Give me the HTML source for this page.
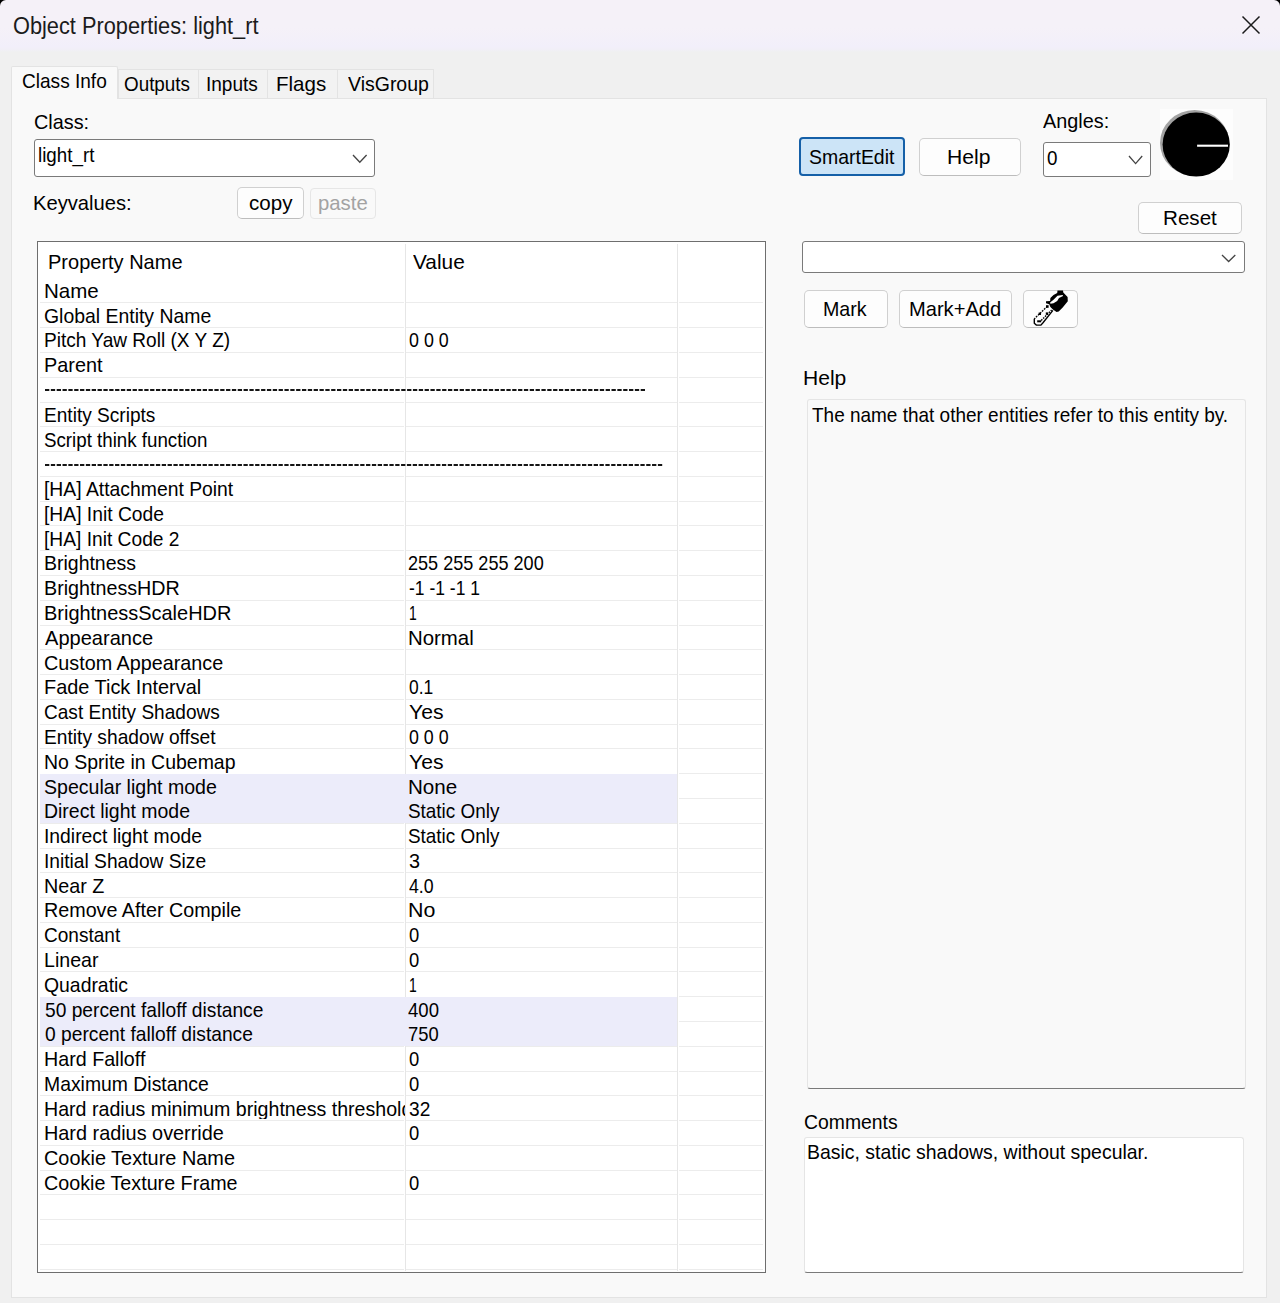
<!DOCTYPE html>
<html><head><meta charset="utf-8"><style>
html,body{margin:0;padding:0}
body{width:1280px;height:1303px;overflow:hidden;position:relative;background:#f0f0f0;font-family:"Liberation Sans",sans-serif}
body div,body svg{position:absolute}
.t{white-space:nowrap;line-height:24px;height:24px;transform-origin:0 0}
</style></head><body>
<div style="left:0.00px;top:0.00px;width:1280.00px;height:54.00px;background:linear-gradient(180deg,#f5f1f8 0,#f5f1f8 28px,#f2effa 47px,#f1eff6 50px,#f0f0f0 52px)"></div>
<svg style="left:0;top:0" width="10" height="10"><path d="M0 0 H6 A6 6 0 0 0 0 6 Z" fill="#000"/></svg>
<svg style="left:1270px;top:0" width="10" height="10"><path d="M10 0 H4 A6 6 0 0 1 10 6 Z" fill="#000"/></svg>
<div class="t" style="left:13.27px;top:13.90px;font-size:23px;transform:scaleX(0.9460);color:#1b1b1b;">Object Properties: light_rt</div>
<svg style="left:1240px;top:14px" width="22" height="22"><path d="M2.5 2.5 L19.5 19.5 M19.5 2.5 L2.5 19.5" stroke="#1a1a1a" stroke-width="1.5" fill="none"/></svg>
<div style="left:11px;top:98px;width:1256px;height:1200px;background:#f9f9f9;border:1px solid #e3e3e3;box-sizing:border-box"></div>
<div style="left:118px;top:69px;width:81px;height:29px;background:#f2f2f2;border:1px solid #e3e3e3;border-bottom:none;box-sizing:border-box"></div>
<div class="t" style="left:124.11px;top:71.60px;font-size:21px;transform:scaleX(0.8970);color:#000;">Outputs</div>
<div style="left:198px;top:69px;width:70px;height:29px;background:#f2f2f2;border:1px solid #e3e3e3;border-bottom:none;box-sizing:border-box"></div>
<div class="t" style="left:206.24px;top:71.60px;font-size:21px;transform:scaleX(0.9061);color:#000;">Inputs</div>
<div style="left:267px;top:69px;width:71px;height:29px;background:#f2f2f2;border:1px solid #e3e3e3;border-bottom:none;box-sizing:border-box"></div>
<div class="t" style="left:276.32px;top:71.60px;font-size:21px;transform:scaleX(0.9779);color:#000;">Flags</div>
<div style="left:337px;top:69px;width:97px;height:29px;background:#f2f2f2;border:1px solid #e3e3e3;border-bottom:none;box-sizing:border-box"></div>
<div class="t" style="left:347.91px;top:71.60px;font-size:21px;transform:scaleX(0.9281);color:#000;">VisGroup</div>
<div style="left:11px;top:66px;width:107px;height:33px;background:#f9f9f9;border:1px solid #e3e3e3;border-bottom:none;box-sizing:border-box;border-radius:2px 2px 0 0"></div>
<div class="t" style="left:22.03px;top:69.00px;font-size:21px;transform:scaleX(0.9078);color:#000;">Class Info</div>
<div class="t" style="left:33.59px;top:109.60px;font-size:21px;transform:scaleX(0.9445);color:#000;">Class:</div>
<div style="left:34px;top:139px;width:341px;height:38px;background:#fff;border:1px solid #7a7a7a;box-sizing:border-box;border-radius:3px"></div>
<div class="t" style="left:37.73px;top:143.00px;font-size:21px;transform:scaleX(0.8949);color:#000;">light_rt</div>
<svg style="left:351.00px;top:153.00px" width="17.60" height="11.30"><path d="M2 2 L8.80 9.30 L15.60 2" fill="none" stroke="#444" stroke-width="1.3"/></svg>
<div class="t" style="left:32.95px;top:190.80px;font-size:21px;transform:scaleX(0.9607);color:#000;">Keyvalues:</div>
<div style="left:237px;top:187px;width:67px;height:32px;background:#fdfdfd;border:1px solid #d0d0d0;border-bottom-color:#bdbdbd;box-sizing:border-box;border-radius:5px"></div>
<div class="t" style="left:248.53px;top:191.00px;font-size:21px;transform:scaleX(0.9787);color:#000;">copy</div>
<div style="left:310px;top:188px;width:66px;height:31px;background:#f9f9f9;border:1px solid #e6e6e6;box-sizing:border-box;border-radius:4px"></div>
<div class="t" style="left:318.09px;top:191.00px;font-size:21px;transform:scaleX(0.9676);color:#a3a3a3;">paste</div>
<div style="left:37px;top:241px;width:729px;height:1032px;background:#fff;border:1px solid #6e6e6e;box-sizing:border-box"></div>
<div style="left:40.00px;top:302.40px;width:364.00px;height:1.00px;background:#ececec"></div>
<div style="left:406.00px;top:302.40px;width:270.50px;height:1.00px;background:#ececec"></div>
<div style="left:678.50px;top:302.40px;width:84.50px;height:1.00px;background:#ececec"></div>
<div style="left:40.00px;top:327.18px;width:364.00px;height:1.00px;background:#ececec"></div>
<div style="left:406.00px;top:327.18px;width:270.50px;height:1.00px;background:#ececec"></div>
<div style="left:678.50px;top:327.18px;width:84.50px;height:1.00px;background:#ececec"></div>
<div style="left:40.00px;top:351.96px;width:364.00px;height:1.00px;background:#ececec"></div>
<div style="left:406.00px;top:351.96px;width:270.50px;height:1.00px;background:#ececec"></div>
<div style="left:678.50px;top:351.96px;width:84.50px;height:1.00px;background:#ececec"></div>
<div style="left:40.00px;top:376.74px;width:364.00px;height:1.00px;background:#ececec"></div>
<div style="left:406.00px;top:376.74px;width:270.50px;height:1.00px;background:#ececec"></div>
<div style="left:678.50px;top:376.74px;width:84.50px;height:1.00px;background:#ececec"></div>
<div style="left:40.00px;top:401.52px;width:364.00px;height:1.00px;background:#ececec"></div>
<div style="left:406.00px;top:401.52px;width:270.50px;height:1.00px;background:#ececec"></div>
<div style="left:678.50px;top:401.52px;width:84.50px;height:1.00px;background:#ececec"></div>
<div style="left:40.00px;top:426.30px;width:364.00px;height:1.00px;background:#ececec"></div>
<div style="left:406.00px;top:426.30px;width:270.50px;height:1.00px;background:#ececec"></div>
<div style="left:678.50px;top:426.30px;width:84.50px;height:1.00px;background:#ececec"></div>
<div style="left:40.00px;top:451.08px;width:364.00px;height:1.00px;background:#ececec"></div>
<div style="left:406.00px;top:451.08px;width:270.50px;height:1.00px;background:#ececec"></div>
<div style="left:678.50px;top:451.08px;width:84.50px;height:1.00px;background:#ececec"></div>
<div style="left:40.00px;top:475.86px;width:364.00px;height:1.00px;background:#ececec"></div>
<div style="left:406.00px;top:475.86px;width:270.50px;height:1.00px;background:#ececec"></div>
<div style="left:678.50px;top:475.86px;width:84.50px;height:1.00px;background:#ececec"></div>
<div style="left:40.00px;top:500.64px;width:364.00px;height:1.00px;background:#ececec"></div>
<div style="left:406.00px;top:500.64px;width:270.50px;height:1.00px;background:#ececec"></div>
<div style="left:678.50px;top:500.64px;width:84.50px;height:1.00px;background:#ececec"></div>
<div style="left:40.00px;top:525.42px;width:364.00px;height:1.00px;background:#ececec"></div>
<div style="left:406.00px;top:525.42px;width:270.50px;height:1.00px;background:#ececec"></div>
<div style="left:678.50px;top:525.42px;width:84.50px;height:1.00px;background:#ececec"></div>
<div style="left:40.00px;top:550.20px;width:364.00px;height:1.00px;background:#ececec"></div>
<div style="left:406.00px;top:550.20px;width:270.50px;height:1.00px;background:#ececec"></div>
<div style="left:678.50px;top:550.20px;width:84.50px;height:1.00px;background:#ececec"></div>
<div style="left:40.00px;top:574.98px;width:364.00px;height:1.00px;background:#ececec"></div>
<div style="left:406.00px;top:574.98px;width:270.50px;height:1.00px;background:#ececec"></div>
<div style="left:678.50px;top:574.98px;width:84.50px;height:1.00px;background:#ececec"></div>
<div style="left:40.00px;top:599.76px;width:364.00px;height:1.00px;background:#ececec"></div>
<div style="left:406.00px;top:599.76px;width:270.50px;height:1.00px;background:#ececec"></div>
<div style="left:678.50px;top:599.76px;width:84.50px;height:1.00px;background:#ececec"></div>
<div style="left:40.00px;top:624.54px;width:364.00px;height:1.00px;background:#ececec"></div>
<div style="left:406.00px;top:624.54px;width:270.50px;height:1.00px;background:#ececec"></div>
<div style="left:678.50px;top:624.54px;width:84.50px;height:1.00px;background:#ececec"></div>
<div style="left:40.00px;top:649.32px;width:364.00px;height:1.00px;background:#ececec"></div>
<div style="left:406.00px;top:649.32px;width:270.50px;height:1.00px;background:#ececec"></div>
<div style="left:678.50px;top:649.32px;width:84.50px;height:1.00px;background:#ececec"></div>
<div style="left:40.00px;top:674.10px;width:364.00px;height:1.00px;background:#ececec"></div>
<div style="left:406.00px;top:674.10px;width:270.50px;height:1.00px;background:#ececec"></div>
<div style="left:678.50px;top:674.10px;width:84.50px;height:1.00px;background:#ececec"></div>
<div style="left:40.00px;top:698.88px;width:364.00px;height:1.00px;background:#ececec"></div>
<div style="left:406.00px;top:698.88px;width:270.50px;height:1.00px;background:#ececec"></div>
<div style="left:678.50px;top:698.88px;width:84.50px;height:1.00px;background:#ececec"></div>
<div style="left:40.00px;top:723.66px;width:364.00px;height:1.00px;background:#ececec"></div>
<div style="left:406.00px;top:723.66px;width:270.50px;height:1.00px;background:#ececec"></div>
<div style="left:678.50px;top:723.66px;width:84.50px;height:1.00px;background:#ececec"></div>
<div style="left:40.00px;top:748.44px;width:364.00px;height:1.00px;background:#ececec"></div>
<div style="left:406.00px;top:748.44px;width:270.50px;height:1.00px;background:#ececec"></div>
<div style="left:678.50px;top:748.44px;width:84.50px;height:1.00px;background:#ececec"></div>
<div style="left:678.50px;top:773.22px;width:84.50px;height:1.00px;background:#ececec"></div>
<div style="left:678.50px;top:798.00px;width:84.50px;height:1.00px;background:#ececec"></div>
<div style="left:40.00px;top:822.78px;width:364.00px;height:1.00px;background:#ececec"></div>
<div style="left:406.00px;top:822.78px;width:270.50px;height:1.00px;background:#ececec"></div>
<div style="left:678.50px;top:822.78px;width:84.50px;height:1.00px;background:#ececec"></div>
<div style="left:40.00px;top:847.56px;width:364.00px;height:1.00px;background:#ececec"></div>
<div style="left:406.00px;top:847.56px;width:270.50px;height:1.00px;background:#ececec"></div>
<div style="left:678.50px;top:847.56px;width:84.50px;height:1.00px;background:#ececec"></div>
<div style="left:40.00px;top:872.34px;width:364.00px;height:1.00px;background:#ececec"></div>
<div style="left:406.00px;top:872.34px;width:270.50px;height:1.00px;background:#ececec"></div>
<div style="left:678.50px;top:872.34px;width:84.50px;height:1.00px;background:#ececec"></div>
<div style="left:40.00px;top:897.12px;width:364.00px;height:1.00px;background:#ececec"></div>
<div style="left:406.00px;top:897.12px;width:270.50px;height:1.00px;background:#ececec"></div>
<div style="left:678.50px;top:897.12px;width:84.50px;height:1.00px;background:#ececec"></div>
<div style="left:40.00px;top:921.90px;width:364.00px;height:1.00px;background:#ececec"></div>
<div style="left:406.00px;top:921.90px;width:270.50px;height:1.00px;background:#ececec"></div>
<div style="left:678.50px;top:921.90px;width:84.50px;height:1.00px;background:#ececec"></div>
<div style="left:40.00px;top:946.68px;width:364.00px;height:1.00px;background:#ececec"></div>
<div style="left:406.00px;top:946.68px;width:270.50px;height:1.00px;background:#ececec"></div>
<div style="left:678.50px;top:946.68px;width:84.50px;height:1.00px;background:#ececec"></div>
<div style="left:40.00px;top:971.46px;width:364.00px;height:1.00px;background:#ececec"></div>
<div style="left:406.00px;top:971.46px;width:270.50px;height:1.00px;background:#ececec"></div>
<div style="left:678.50px;top:971.46px;width:84.50px;height:1.00px;background:#ececec"></div>
<div style="left:678.50px;top:996.24px;width:84.50px;height:1.00px;background:#ececec"></div>
<div style="left:678.50px;top:1021.02px;width:84.50px;height:1.00px;background:#ececec"></div>
<div style="left:40.00px;top:1045.80px;width:364.00px;height:1.00px;background:#ececec"></div>
<div style="left:406.00px;top:1045.80px;width:270.50px;height:1.00px;background:#ececec"></div>
<div style="left:678.50px;top:1045.80px;width:84.50px;height:1.00px;background:#ececec"></div>
<div style="left:40.00px;top:1070.58px;width:364.00px;height:1.00px;background:#ececec"></div>
<div style="left:406.00px;top:1070.58px;width:270.50px;height:1.00px;background:#ececec"></div>
<div style="left:678.50px;top:1070.58px;width:84.50px;height:1.00px;background:#ececec"></div>
<div style="left:40.00px;top:1095.36px;width:364.00px;height:1.00px;background:#ececec"></div>
<div style="left:406.00px;top:1095.36px;width:270.50px;height:1.00px;background:#ececec"></div>
<div style="left:678.50px;top:1095.36px;width:84.50px;height:1.00px;background:#ececec"></div>
<div style="left:40.00px;top:1120.14px;width:364.00px;height:1.00px;background:#ececec"></div>
<div style="left:406.00px;top:1120.14px;width:270.50px;height:1.00px;background:#ececec"></div>
<div style="left:678.50px;top:1120.14px;width:84.50px;height:1.00px;background:#ececec"></div>
<div style="left:40.00px;top:1144.92px;width:364.00px;height:1.00px;background:#ececec"></div>
<div style="left:406.00px;top:1144.92px;width:270.50px;height:1.00px;background:#ececec"></div>
<div style="left:678.50px;top:1144.92px;width:84.50px;height:1.00px;background:#ececec"></div>
<div style="left:40.00px;top:1169.70px;width:364.00px;height:1.00px;background:#ececec"></div>
<div style="left:406.00px;top:1169.70px;width:270.50px;height:1.00px;background:#ececec"></div>
<div style="left:678.50px;top:1169.70px;width:84.50px;height:1.00px;background:#ececec"></div>
<div style="left:40.00px;top:1194.48px;width:364.00px;height:1.00px;background:#ececec"></div>
<div style="left:406.00px;top:1194.48px;width:270.50px;height:1.00px;background:#ececec"></div>
<div style="left:678.50px;top:1194.48px;width:84.50px;height:1.00px;background:#ececec"></div>
<div style="left:40.00px;top:1219.26px;width:364.00px;height:1.00px;background:#ececec"></div>
<div style="left:406.00px;top:1219.26px;width:270.50px;height:1.00px;background:#ececec"></div>
<div style="left:678.50px;top:1219.26px;width:84.50px;height:1.00px;background:#ececec"></div>
<div style="left:40.00px;top:1244.04px;width:364.00px;height:1.00px;background:#ececec"></div>
<div style="left:406.00px;top:1244.04px;width:270.50px;height:1.00px;background:#ececec"></div>
<div style="left:678.50px;top:1244.04px;width:84.50px;height:1.00px;background:#ececec"></div>
<div style="left:40.00px;top:1268.82px;width:364.00px;height:1.00px;background:#ececec"></div>
<div style="left:406.00px;top:1268.82px;width:270.50px;height:1.00px;background:#ececec"></div>
<div style="left:678.50px;top:1268.82px;width:84.50px;height:1.00px;background:#ececec"></div>
<div style="left:404.50px;top:244.00px;width:1.00px;height:1027.00px;background:#e6e6e6"></div>
<div style="left:677.00px;top:244.00px;width:1.00px;height:1027.00px;background:#e6e6e6"></div>
<div style="left:40.00px;top:773.72px;width:637.00px;height:49.56px;background:#ececfa"></div>
<div style="left:40.00px;top:996.74px;width:637.00px;height:49.56px;background:#ececfa"></div>
<div class="t" style="left:48.06px;top:249.70px;font-size:21px;transform:scaleX(0.9526);color:#000;">Property Name</div>
<div class="t" style="left:412.61px;top:249.60px;font-size:21px;transform:scaleX(0.9916);color:#000;">Value</div>
<div class="t" style="left:43.62px;top:278.90px;font-size:21px;transform:scaleX(0.9780);color:#000;">Name</div>
<div class="t" style="left:44.32px;top:303.68px;font-size:21px;transform:scaleX(0.9246);color:#000;">Global Entity Name</div>
<div class="t" style="left:43.74px;top:328.46px;font-size:21px;transform:scaleX(0.9081);color:#000;">Pitch Yaw Roll (X Y Z)</div>
<div class="t" style="left:408.60px;top:328.46px;font-size:21px;transform:scaleX(0.8496);color:#000;">0 0 0</div>
<div class="t" style="left:43.67px;top:353.24px;font-size:21px;transform:scaleX(0.9450);color:#000;">Parent</div>
<svg style="left:44.5px;top:389.32px" width="604.5" height="2" fill="#151515"><rect x="0.00" y="0" width="4.3" height="2" /><rect x="5.84" y="0" width="4.3" height="2" /><rect x="11.68" y="0" width="4.3" height="2" /><rect x="17.52" y="0" width="4.3" height="2" /><rect x="23.36" y="0" width="4.3" height="2" /><rect x="29.20" y="0" width="4.3" height="2" /><rect x="35.04" y="0" width="4.3" height="2" /><rect x="40.88" y="0" width="4.3" height="2" /><rect x="46.72" y="0" width="4.3" height="2" /><rect x="52.56" y="0" width="4.3" height="2" /><rect x="58.40" y="0" width="4.3" height="2" /><rect x="64.24" y="0" width="4.3" height="2" /><rect x="70.08" y="0" width="4.3" height="2" /><rect x="75.92" y="0" width="4.3" height="2" /><rect x="81.76" y="0" width="4.3" height="2" /><rect x="87.60" y="0" width="4.3" height="2" /><rect x="93.44" y="0" width="4.3" height="2" /><rect x="99.28" y="0" width="4.3" height="2" /><rect x="105.12" y="0" width="4.3" height="2" /><rect x="110.96" y="0" width="4.3" height="2" /><rect x="116.80" y="0" width="4.3" height="2" /><rect x="122.64" y="0" width="4.3" height="2" /><rect x="128.48" y="0" width="4.3" height="2" /><rect x="134.32" y="0" width="4.3" height="2" /><rect x="140.16" y="0" width="4.3" height="2" /><rect x="146.00" y="0" width="4.3" height="2" /><rect x="151.85" y="0" width="4.3" height="2" /><rect x="157.69" y="0" width="4.3" height="2" /><rect x="163.53" y="0" width="4.3" height="2" /><rect x="169.37" y="0" width="4.3" height="2" /><rect x="175.21" y="0" width="4.3" height="2" /><rect x="181.05" y="0" width="4.3" height="2" /><rect x="186.89" y="0" width="4.3" height="2" /><rect x="192.73" y="0" width="4.3" height="2" /><rect x="198.57" y="0" width="4.3" height="2" /><rect x="204.41" y="0" width="4.3" height="2" /><rect x="210.25" y="0" width="4.3" height="2" /><rect x="216.09" y="0" width="4.3" height="2" /><rect x="221.93" y="0" width="4.3" height="2" /><rect x="227.77" y="0" width="4.3" height="2" /><rect x="233.61" y="0" width="4.3" height="2" /><rect x="239.45" y="0" width="4.3" height="2" /><rect x="245.29" y="0" width="4.3" height="2" /><rect x="251.13" y="0" width="4.3" height="2" /><rect x="256.97" y="0" width="4.3" height="2" /><rect x="262.81" y="0" width="4.3" height="2" /><rect x="268.65" y="0" width="4.3" height="2" /><rect x="274.49" y="0" width="4.3" height="2" /><rect x="280.33" y="0" width="4.3" height="2" /><rect x="286.17" y="0" width="4.3" height="2" /><rect x="292.01" y="0" width="4.3" height="2" /><rect x="297.85" y="0" width="4.3" height="2" /><rect x="303.69" y="0" width="4.3" height="2" /><rect x="309.53" y="0" width="4.3" height="2" /><rect x="315.37" y="0" width="4.3" height="2" /><rect x="321.21" y="0" width="4.3" height="2" /><rect x="327.05" y="0" width="4.3" height="2" /><rect x="332.89" y="0" width="4.3" height="2" /><rect x="338.73" y="0" width="4.3" height="2" /><rect x="344.57" y="0" width="4.3" height="2" /><rect x="350.41" y="0" width="4.3" height="2" /><rect x="356.25" y="0" width="4.3" height="2" /><rect x="362.09" y="0" width="4.3" height="2" /><rect x="367.93" y="0" width="4.3" height="2" /><rect x="373.77" y="0" width="4.3" height="2" /><rect x="379.61" y="0" width="4.3" height="2" /><rect x="385.45" y="0" width="4.3" height="2" /><rect x="391.29" y="0" width="4.3" height="2" /><rect x="397.13" y="0" width="4.3" height="2" /><rect x="402.97" y="0" width="4.3" height="2" /><rect x="408.81" y="0" width="4.3" height="2" /><rect x="414.65" y="0" width="4.3" height="2" /><rect x="420.49" y="0" width="4.3" height="2" /><rect x="426.33" y="0" width="4.3" height="2" /><rect x="432.17" y="0" width="4.3" height="2" /><rect x="438.01" y="0" width="4.3" height="2" /><rect x="443.85" y="0" width="4.3" height="2" /><rect x="449.70" y="0" width="4.3" height="2" /><rect x="455.54" y="0" width="4.3" height="2" /><rect x="461.38" y="0" width="4.3" height="2" /><rect x="467.22" y="0" width="4.3" height="2" /><rect x="473.06" y="0" width="4.3" height="2" /><rect x="478.90" y="0" width="4.3" height="2" /><rect x="484.74" y="0" width="4.3" height="2" /><rect x="490.58" y="0" width="4.3" height="2" /><rect x="496.42" y="0" width="4.3" height="2" /><rect x="502.26" y="0" width="4.3" height="2" /><rect x="508.10" y="0" width="4.3" height="2" /><rect x="513.94" y="0" width="4.3" height="2" /><rect x="519.78" y="0" width="4.3" height="2" /><rect x="525.62" y="0" width="4.3" height="2" /><rect x="531.46" y="0" width="4.3" height="2" /><rect x="537.30" y="0" width="4.3" height="2" /><rect x="543.14" y="0" width="4.3" height="2" /><rect x="548.98" y="0" width="4.3" height="2" /><rect x="554.82" y="0" width="4.3" height="2" /><rect x="560.66" y="0" width="4.3" height="2" /><rect x="566.50" y="0" width="4.3" height="2" /><rect x="572.34" y="0" width="4.3" height="2" /><rect x="578.18" y="0" width="4.3" height="2" /><rect x="584.02" y="0" width="4.3" height="2" /><rect x="589.86" y="0" width="4.3" height="2" /><rect x="595.70" y="0" width="4.3" height="2" /></svg>
<div class="t" style="left:43.73px;top:402.80px;font-size:21px;transform:scaleX(0.9087);color:#000;">Entity Scripts</div>
<div class="t" style="left:44.45px;top:427.58px;font-size:21px;transform:scaleX(0.8914);color:#000;">Script think function</div>
<svg style="left:44.5px;top:463.66px" width="621.7" height="2" fill="#151515"><rect x="0.00" y="0" width="4.3" height="2" /><rect x="5.84" y="0" width="4.3" height="2" /><rect x="11.67" y="0" width="4.3" height="2" /><rect x="17.51" y="0" width="4.3" height="2" /><rect x="23.35" y="0" width="4.3" height="2" /><rect x="29.19" y="0" width="4.3" height="2" /><rect x="35.02" y="0" width="4.3" height="2" /><rect x="40.86" y="0" width="4.3" height="2" /><rect x="46.70" y="0" width="4.3" height="2" /><rect x="52.53" y="0" width="4.3" height="2" /><rect x="58.37" y="0" width="4.3" height="2" /><rect x="64.21" y="0" width="4.3" height="2" /><rect x="70.05" y="0" width="4.3" height="2" /><rect x="75.88" y="0" width="4.3" height="2" /><rect x="81.72" y="0" width="4.3" height="2" /><rect x="87.56" y="0" width="4.3" height="2" /><rect x="93.39" y="0" width="4.3" height="2" /><rect x="99.23" y="0" width="4.3" height="2" /><rect x="105.07" y="0" width="4.3" height="2" /><rect x="110.91" y="0" width="4.3" height="2" /><rect x="116.74" y="0" width="4.3" height="2" /><rect x="122.58" y="0" width="4.3" height="2" /><rect x="128.42" y="0" width="4.3" height="2" /><rect x="134.25" y="0" width="4.3" height="2" /><rect x="140.09" y="0" width="4.3" height="2" /><rect x="145.93" y="0" width="4.3" height="2" /><rect x="151.77" y="0" width="4.3" height="2" /><rect x="157.60" y="0" width="4.3" height="2" /><rect x="163.44" y="0" width="4.3" height="2" /><rect x="169.28" y="0" width="4.3" height="2" /><rect x="175.11" y="0" width="4.3" height="2" /><rect x="180.95" y="0" width="4.3" height="2" /><rect x="186.79" y="0" width="4.3" height="2" /><rect x="192.63" y="0" width="4.3" height="2" /><rect x="198.46" y="0" width="4.3" height="2" /><rect x="204.30" y="0" width="4.3" height="2" /><rect x="210.14" y="0" width="4.3" height="2" /><rect x="215.97" y="0" width="4.3" height="2" /><rect x="221.81" y="0" width="4.3" height="2" /><rect x="227.65" y="0" width="4.3" height="2" /><rect x="233.49" y="0" width="4.3" height="2" /><rect x="239.32" y="0" width="4.3" height="2" /><rect x="245.16" y="0" width="4.3" height="2" /><rect x="251.00" y="0" width="4.3" height="2" /><rect x="256.83" y="0" width="4.3" height="2" /><rect x="262.67" y="0" width="4.3" height="2" /><rect x="268.51" y="0" width="4.3" height="2" /><rect x="274.35" y="0" width="4.3" height="2" /><rect x="280.18" y="0" width="4.3" height="2" /><rect x="286.02" y="0" width="4.3" height="2" /><rect x="291.86" y="0" width="4.3" height="2" /><rect x="297.69" y="0" width="4.3" height="2" /><rect x="303.53" y="0" width="4.3" height="2" /><rect x="309.37" y="0" width="4.3" height="2" /><rect x="315.21" y="0" width="4.3" height="2" /><rect x="321.04" y="0" width="4.3" height="2" /><rect x="326.88" y="0" width="4.3" height="2" /><rect x="332.72" y="0" width="4.3" height="2" /><rect x="338.55" y="0" width="4.3" height="2" /><rect x="344.39" y="0" width="4.3" height="2" /><rect x="350.23" y="0" width="4.3" height="2" /><rect x="356.07" y="0" width="4.3" height="2" /><rect x="361.90" y="0" width="4.3" height="2" /><rect x="367.74" y="0" width="4.3" height="2" /><rect x="373.58" y="0" width="4.3" height="2" /><rect x="379.41" y="0" width="4.3" height="2" /><rect x="385.25" y="0" width="4.3" height="2" /><rect x="391.09" y="0" width="4.3" height="2" /><rect x="396.93" y="0" width="4.3" height="2" /><rect x="402.76" y="0" width="4.3" height="2" /><rect x="408.60" y="0" width="4.3" height="2" /><rect x="414.44" y="0" width="4.3" height="2" /><rect x="420.27" y="0" width="4.3" height="2" /><rect x="426.11" y="0" width="4.3" height="2" /><rect x="431.95" y="0" width="4.3" height="2" /><rect x="437.79" y="0" width="4.3" height="2" /><rect x="443.62" y="0" width="4.3" height="2" /><rect x="449.46" y="0" width="4.3" height="2" /><rect x="455.30" y="0" width="4.3" height="2" /><rect x="461.13" y="0" width="4.3" height="2" /><rect x="466.97" y="0" width="4.3" height="2" /><rect x="472.81" y="0" width="4.3" height="2" /><rect x="478.65" y="0" width="4.3" height="2" /><rect x="484.48" y="0" width="4.3" height="2" /><rect x="490.32" y="0" width="4.3" height="2" /><rect x="496.16" y="0" width="4.3" height="2" /><rect x="501.99" y="0" width="4.3" height="2" /><rect x="507.83" y="0" width="4.3" height="2" /><rect x="513.67" y="0" width="4.3" height="2" /><rect x="519.51" y="0" width="4.3" height="2" /><rect x="525.34" y="0" width="4.3" height="2" /><rect x="531.18" y="0" width="4.3" height="2" /><rect x="537.02" y="0" width="4.3" height="2" /><rect x="542.85" y="0" width="4.3" height="2" /><rect x="548.69" y="0" width="4.3" height="2" /><rect x="554.53" y="0" width="4.3" height="2" /><rect x="560.37" y="0" width="4.3" height="2" /><rect x="566.20" y="0" width="4.3" height="2" /><rect x="572.04" y="0" width="4.3" height="2" /><rect x="577.88" y="0" width="4.3" height="2" /><rect x="583.71" y="0" width="4.3" height="2" /><rect x="589.55" y="0" width="4.3" height="2" /><rect x="595.39" y="0" width="4.3" height="2" /><rect x="601.23" y="0" width="4.3" height="2" /><rect x="607.06" y="0" width="4.3" height="2" /><rect x="612.90" y="0" width="4.3" height="2" /></svg>
<div class="t" style="left:43.92px;top:477.14px;font-size:21px;transform:scaleX(0.9211);color:#000;">[HA] Attachment Point</div>
<div class="t" style="left:43.93px;top:501.92px;font-size:21px;transform:scaleX(0.9181);color:#000;">[HA] Init Code</div>
<div class="t" style="left:43.93px;top:526.70px;font-size:21px;transform:scaleX(0.9142);color:#000;">[HA] Init Code 2</div>
<div class="t" style="left:43.70px;top:551.48px;font-size:21px;transform:scaleX(0.9273);color:#000;">Brightness</div>
<div class="t" style="left:408.39px;top:551.48px;font-size:21px;transform:scaleX(0.8608);color:#000;">255 255 255 200</div>
<div class="t" style="left:43.68px;top:576.26px;font-size:21px;transform:scaleX(0.9386);color:#000;">BrightnessHDR</div>
<div class="t" style="left:408.52px;top:576.26px;font-size:21px;transform:scaleX(0.8325);color:#000;">-1 -1 -1 1</div>
<div class="t" style="left:43.66px;top:601.04px;font-size:21px;transform:scaleX(0.9499);color:#000;">BrightnessScaleHDR</div>
<div class="t" style="left:409.34px;top:601.04px;font-size:21px;transform:scaleX(0.6621);color:#000;">1</div>
<div class="t" style="left:45.26px;top:625.82px;font-size:21px;transform:scaleX(0.9555);color:#000;">Appearance</div>
<div class="t" style="left:407.83px;top:625.82px;font-size:21px;transform:scaleX(0.9712);color:#000;">Normal</div>
<div class="t" style="left:44.30px;top:650.60px;font-size:21px;transform:scaleX(0.9416);color:#000;">Custom Appearance</div>
<div class="t" style="left:43.67px;top:675.38px;font-size:21px;transform:scaleX(0.9483);color:#000;">Fade Tick Interval</div>
<div class="t" style="left:408.62px;top:675.38px;font-size:21px;transform:scaleX(0.8298);color:#000;">0.1</div>
<div class="t" style="left:44.33px;top:700.16px;font-size:21px;transform:scaleX(0.9071);color:#000;">Cast Entity Shadows</div>
<div class="t" style="left:409.04px;top:700.16px;font-size:21px;transform:scaleX(1.0077);color:#000;">Yes</div>
<div class="t" style="left:43.72px;top:724.94px;font-size:21px;transform:scaleX(0.9144);color:#000;">Entity shadow offset</div>
<div class="t" style="left:408.60px;top:724.94px;font-size:21px;transform:scaleX(0.8474);color:#000;">0 0 0</div>
<div class="t" style="left:43.70px;top:749.72px;font-size:21px;transform:scaleX(0.9269);color:#000;">No Sprite in Cubemap</div>
<div class="t" style="left:409.04px;top:749.72px;font-size:21px;transform:scaleX(1.0077);color:#000;">Yes</div>
<div class="t" style="left:44.41px;top:774.50px;font-size:21px;transform:scaleX(0.9313);color:#000;">Specular light mode</div>
<div class="t" style="left:407.81px;top:774.50px;font-size:21px;transform:scaleX(0.9801);color:#000;">None</div>
<div class="t" style="left:43.70px;top:799.28px;font-size:21px;transform:scaleX(0.9264);color:#000;">Direct light mode</div>
<div class="t" style="left:408.44px;top:799.28px;font-size:21px;transform:scaleX(0.9000);color:#000;">Static Only</div>
<div class="t" style="left:43.52px;top:824.06px;font-size:21px;transform:scaleX(0.9204);color:#000;">Indirect light mode</div>
<div class="t" style="left:408.44px;top:824.06px;font-size:21px;transform:scaleX(0.9000);color:#000;">Static Only</div>
<div class="t" style="left:43.53px;top:848.84px;font-size:21px;transform:scaleX(0.9137);color:#000;">Initial Shadow Size</div>
<div class="t" style="left:408.55px;top:848.84px;font-size:21px;transform:scaleX(0.9433);color:#000;">3</div>
<div class="t" style="left:43.68px;top:873.62px;font-size:21px;transform:scaleX(0.9416);color:#000;">Near Z</div>
<div class="t" style="left:408.89px;top:873.62px;font-size:21px;transform:scaleX(0.8423);color:#000;">4.0</div>
<div class="t" style="left:43.68px;top:898.40px;font-size:21px;transform:scaleX(0.9391);color:#000;">Remove After Compile</div>
<div class="t" style="left:407.75px;top:898.40px;font-size:21px;transform:scaleX(1.0184);color:#000;">No</div>
<div class="t" style="left:44.33px;top:923.18px;font-size:21px;transform:scaleX(0.9065);color:#000;">Constant</div>
<div class="t" style="left:408.58px;top:923.18px;font-size:21px;transform:scaleX(0.8759);color:#000;">0</div>
<div class="t" style="left:43.69px;top:947.96px;font-size:21px;transform:scaleX(0.9340);color:#000;">Linear</div>
<div class="t" style="left:408.58px;top:947.96px;font-size:21px;transform:scaleX(0.8759);color:#000;">0</div>
<div class="t" style="left:44.38px;top:972.74px;font-size:21px;transform:scaleX(0.9229);color:#000;">Quadratic</div>
<div class="t" style="left:409.34px;top:972.74px;font-size:21px;transform:scaleX(0.6621);color:#000;">1</div>
<div class="t" style="left:44.53px;top:997.52px;font-size:21px;transform:scaleX(0.9137);color:#000;">50 percent falloff distance</div>
<div class="t" style="left:408.17px;top:997.52px;font-size:21px;transform:scaleX(0.8831);color:#000;">400</div>
<div class="t" style="left:44.55px;top:1022.30px;font-size:21px;transform:scaleX(0.9148);color:#000;">0 percent falloff distance</div>
<div class="t" style="left:408.46px;top:1022.30px;font-size:21px;transform:scaleX(0.8748);color:#000;">750</div>
<div class="t" style="left:43.69px;top:1047.08px;font-size:21px;transform:scaleX(0.9373);color:#000;">Hard Falloff</div>
<div class="t" style="left:408.58px;top:1047.08px;font-size:21px;transform:scaleX(0.8759);color:#000;">0</div>
<div class="t" style="left:43.71px;top:1071.86px;font-size:21px;transform:scaleX(0.9227);color:#000;">Maximum Distance</div>
<div class="t" style="left:408.58px;top:1071.86px;font-size:21px;transform:scaleX(0.8759);color:#000;">0</div>
<div style="left:45.3px;top:1090.64px;width:359.7px;height:28px;overflow:hidden">
<div class="t" style="left:-1.61px;top:6.00px;font-size:21px;transform:scaleX(0.9338);color:#000;">Hard radius minimum brightness threshold</div>
</div>
<div class="t" style="left:408.67px;top:1096.64px;font-size:21px;transform:scaleX(0.9115);color:#000;">32</div>
<div class="t" style="left:43.67px;top:1121.42px;font-size:21px;transform:scaleX(0.9450);color:#000;">Hard radius override</div>
<div class="t" style="left:408.58px;top:1121.42px;font-size:21px;transform:scaleX(0.8759);color:#000;">0</div>
<div class="t" style="left:44.29px;top:1146.20px;font-size:21px;transform:scaleX(0.9476);color:#000;">Cookie Texture Name</div>
<div class="t" style="left:44.30px;top:1170.98px;font-size:21px;transform:scaleX(0.9388);color:#000;">Cookie Texture Frame</div>
<div class="t" style="left:408.58px;top:1170.98px;font-size:21px;transform:scaleX(0.8759);color:#000;">0</div>
<div style="left:799px;top:137px;width:106px;height:39px;background:#cce4f7;border:2px solid #1560a8;box-sizing:border-box;border-radius:4px"></div>
<div class="t" style="left:808.82px;top:144.80px;font-size:21px;transform:scaleX(0.9265);color:#000;">SmartEdit</div>
<div style="left:919px;top:138px;width:102px;height:38px;background:#fdfdfd;border:1px solid #d0d0d0;border-bottom-color:#bdbdbd;box-sizing:border-box;border-radius:5px"></div>
<div class="t" style="left:947.27px;top:144.80px;font-size:21px;transform:scaleX(1.0050);color:#000;">Help</div>
<div class="t" style="left:1043.36px;top:109.40px;font-size:21px;transform:scaleX(0.9444);color:#000;">Angles:</div>
<div style="left:1043px;top:142px;width:108px;height:35px;background:#fff;border:1px solid #7a7a7a;box-sizing:border-box;border-radius:3px"></div>
<div class="t" style="left:1047.27px;top:146.30px;font-size:21px;transform:scaleX(0.8958);color:#000;">0</div>
<svg style="left:1126.80px;top:154.40px" width="17.20" height="11.60"><path d="M2 2 L8.60 9.60 L15.20 2" fill="none" stroke="#444" stroke-width="1.3"/></svg>
<div style="left:1159.80px;top:108.60px;width:73.70px;height:71.40px;background:#fdfdfd"></div>
<svg style="left:1158px;top:107px" width="76" height="74"><ellipse cx="36.6" cy="36" rx="34.6" ry="33" fill="#a3a3a3"/><ellipse cx="38.2" cy="37.6" rx="33.6" ry="32" fill="#000"/><path d="M39.1 38.7 H70" stroke="#fff" stroke-width="2.1"/></svg>
<div style="left:1138px;top:202px;width:104px;height:32px;background:#fdfdfd;border:1px solid #d0d0d0;border-bottom-color:#bdbdbd;box-sizing:border-box;border-radius:5px"></div>
<div class="t" style="left:1163.21px;top:205.90px;font-size:21px;transform:scaleX(0.9814);color:#000;">Reset</div>
<div style="left:802px;top:241px;width:443px;height:32px;background:#fff;border:1px solid #7a7a7a;box-sizing:border-box;border-radius:3px"></div>
<svg style="left:1220.30px;top:252.80px" width="17.30" height="10.50"><path d="M2 2 L8.65 8.50 L15.30 2" fill="none" stroke="#444" stroke-width="1.3"/></svg>
<div style="left:804px;top:290px;width:84px;height:38px;background:#fdfdfd;border:1px solid #d0d0d0;border-bottom-color:#bdbdbd;box-sizing:border-box;border-radius:5px"></div>
<div class="t" style="left:823.29px;top:297.20px;font-size:21px;transform:scaleX(0.9360);color:#000;">Mark</div>
<div style="left:899px;top:290px;width:113px;height:38px;background:#fdfdfd;border:1px solid #d0d0d0;border-bottom-color:#bdbdbd;box-sizing:border-box;border-radius:5px"></div>
<div class="t" style="left:909.15px;top:297.20px;font-size:21px;transform:scaleX(0.9569);color:#000;">Mark+Add</div>
<div style="left:1023px;top:290px;width:55px;height:38px;background:#fdfdfd;border:1px solid #d0d0d0;border-bottom-color:#bdbdbd;box-sizing:border-box;border-radius:5px"></div>
<svg style="left:1032px;top:289px" width="40" height="40" viewBox="0 0 40 40"><g transform="translate(-1032,-289)">
<path d="M1057.5 290.6 H1063 L1063.3 292.6 L1067.6 296.9 L1067.8 301.2 L1062.7 307.6 L1058.7 311.6 L1056.6 311.9 L1052.9 309.5 L1050.4 307 L1049.2 304.3 L1046 303.3 V301.2 L1050.1 300.9 L1050.4 298.1 L1053.5 295.1 L1057.2 292.9 Z" fill="#000"/>
<path d="M1062.7 294.9 L1063 296 L1059 298.1 L1057.2 300.9 L1053.5 303.3 L1050.4 303.7 L1050.1 302.4 L1053.5 299.7 L1057.5 295.7 Z" fill="#fff"/>
<path d="M1047.3 306.4 L1035.1 318.1" fill="none" stroke="#000" stroke-width="1.3" stroke-dasharray="1.8 1"/><path d="M1035.1 318.1 L1034.3 319.2 V323.3 L1036.3 325.1 H1040.9 L1043 322.7 L1052.9 310.4" fill="none" stroke="#000" stroke-width="1.4" stroke-linejoin="miter"/>
<path d="M1041.2 320.5 L1051.6 310.1" fill="none" stroke="#000" stroke-width="1.4" stroke-dasharray="1.6 1.1"/>
<rect x="1037.2" y="320.3" width="4" height="2" fill="#000"/>
<rect x="1046" y="305.2" width="2.6" height="2.6" fill="#000"/>
<rect x="1038.6" y="312.6" width="2.4" height="2.4" fill="#000"/>
<rect x="1045.8" y="312.4" width="2.4" height="2.4" fill="#000"/>
</g>
</svg>
<div class="t" style="left:802.87px;top:366.40px;font-size:21px;transform:scaleX(1.0025);color:#000;">Help</div>
<div style="left:807px;top:399px;width:439px;height:690px;background:#f9f9f9;border:1px solid #e5e5e5;border-bottom:1.5px solid #7a7a7a;box-sizing:border-box;border-radius:3px"></div>
<div class="t" style="left:812.07px;top:402.60px;font-size:21px;transform:scaleX(0.9033);color:#000;">The name that other entities refer to this entity by.</div>
<div class="t" style="left:803.62px;top:1109.70px;font-size:21px;transform:scaleX(0.9227);color:#000;">Comments</div>
<div style="left:804px;top:1137px;width:440px;height:136px;background:#fff;border:1px solid #e5e5e5;border-bottom:1.5px solid #7a7a7a;box-sizing:border-box;border-radius:3px"></div>
<div class="t" style="left:807.21px;top:1140.40px;font-size:21px;transform:scaleX(0.9255);color:#000;">Basic, static shadows, without specular.</div>
</body></html>
